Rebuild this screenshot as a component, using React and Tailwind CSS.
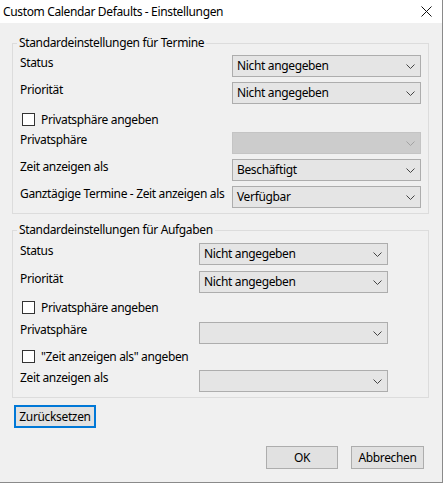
import React from "react";

const Chevron = () => (
  <svg width="9" height="5" viewBox="0 0 9 5" className="shrink-0">
    <path d="M0.5 0.5 L4.5 4.5 L8.5 0.5" fill="none" stroke="#444" strokeWidth="1" />
  </svg>
);

const Select = ({ value, disabled, width }) => (
  <div
    className={`flex h-[22px] items-center justify-between border pl-[4px] pr-[5px] ${width} ${
      disabled ? "bg-[#cccccc] border-[#c4c4c4]" : "bg-[#e5e5e5] border-[#adadad]"
    }`}
  >
    <span className="leading-[16px]">{value}</span>
    <span className={disabled ? "opacity-30" : ""}>
      <Chevron />
    </span>
  </div>
);

const Row = ({ label, value, disabled, labelW, selectW, className = "" }) => (
  <div className={`flex items-start ${className}`}>
    <div className={`${labelW} whitespace-nowrap leading-[16px]`}>{label}</div>
    <Select value={value} disabled={disabled} width={selectW} />
  </div>
);

const Check = ({ label, className = "" }) => (
  <div className={`flex items-center h-[13px] pl-[2px] ${className}`}>
    <div className="w-[13px] h-[13px] border border-[#333333] bg-white" />
    <span className="ml-[6px] leading-[16px] whitespace-nowrap">{label}</span>
  </div>
);

export default function App() {
  return (
    <div
      className="w-[443px] h-[483px] bg-[#f0f0f0] border-r border-b border-[#8a8a8a] text-[12px] tracking-[-0.35px] text-black flex flex-col"
      style={{ fontFamily: '"Noto Sans", sans-serif' }}
    >
      {/* title bar */}
      <div className="h-[23px] bg-white flex items-center justify-between pl-[3px] pr-[10px] shrink-0">
        <span className="text-[12px] leading-[16px]">Custom Calendar Defaults - Einstellungen</span>
        <svg width="11" height="11" viewBox="0 0 11 11">
          <path d="M0.5 0.5 L10.5 10.5 M10.5 0.5 L0.5 10.5" stroke="#111" strokeWidth="1" />
        </svg>
      </div>

      {/* Termine */}
      <fieldset className="ml-[12px] mt-[12px] w-[417px] border border-[#dcdcdc] px-[7px] pt-[4px] pb-[5px]">
        <legend className="-ml-[3px] px-[2px] leading-[16px]">Standardeinstellungen für Termine</legend>
        <div className="flex flex-col">
          <Row label="Status" value="Nicht angegeben" labelW="w-[212px]" selectW="w-[189px]" />
          <Row label="Priorität" value="Nicht angegeben" labelW="w-[212px]" selectW="w-[189px]" className="mt-[5px]" />
          <Check label="Privatsphäre angeben" className="mt-[9px]" />
          <Row label="Privatsphäre" value="" disabled labelW="w-[212px]" selectW="w-[189px]" className="mt-[6px]" />
          <Row label="Zeit anzeigen als" value="Beschäftigt" labelW="w-[212px]" selectW="w-[189px]" className="mt-[5px]" />
          <Row
            label="Ganztägige Termine - Zeit anzeigen als"
            value="Verfügbar"
            labelW="w-[212px]"
            selectW="w-[189px]"
            className="mt-[5px]"
          />
        </div>
      </fieldset>

      {/* Aufgaben */}
      <fieldset className="ml-[12px] mt-[8px] w-[417px] border border-[#dcdcdc] px-[7px] pt-[5px] pb-[5px]">
        <legend className="-ml-[3px] px-[2px] leading-[16px]">Standardeinstellungen für Aufgaben</legend>
        <div className="flex flex-col">
          <Row label="Status" value="Nicht angegeben" labelW="w-[179px]" selectW="w-[189px]" />
          <Row label="Priorität" value="Nicht angegeben" labelW="w-[179px]" selectW="w-[189px]" className="mt-[6px]" />
          <Check label="Privatsphäre angeben" className="mt-[8px]" />
          <Row label="Privatsphäre" value="" labelW="w-[179px]" selectW="w-[189px]" className="mt-[8px]" />
          <Check label={'"Zeit anzeigen als" angeben'} className="mt-[6px]" />
          <Row label="Zeit anzeigen als" value="" labelW="w-[179px]" selectW="w-[189px]" className="mt-[7px]" />
        </div>
      </fieldset>

      <div className="ml-[14px] mt-[7px]">
        <button className="h-[23px] w-[82px] border-2 border-[#0078d7] bg-[#e1e1e1] leading-[16px]">
          Zurücksetzen
        </button>
      </div>

      <div className="mt-auto mb-[13px] mr-[18px] flex justify-end gap-[13px]">
        <button className="h-[23px] w-[72px] border border-[#adadad] bg-[#e1e1e1] leading-[16px]">OK</button>
        <button className="h-[23px] w-[73px] border border-[#adadad] bg-[#e1e1e1] leading-[16px]">Abbrechen</button>
      </div>
    </div>
  );
}
